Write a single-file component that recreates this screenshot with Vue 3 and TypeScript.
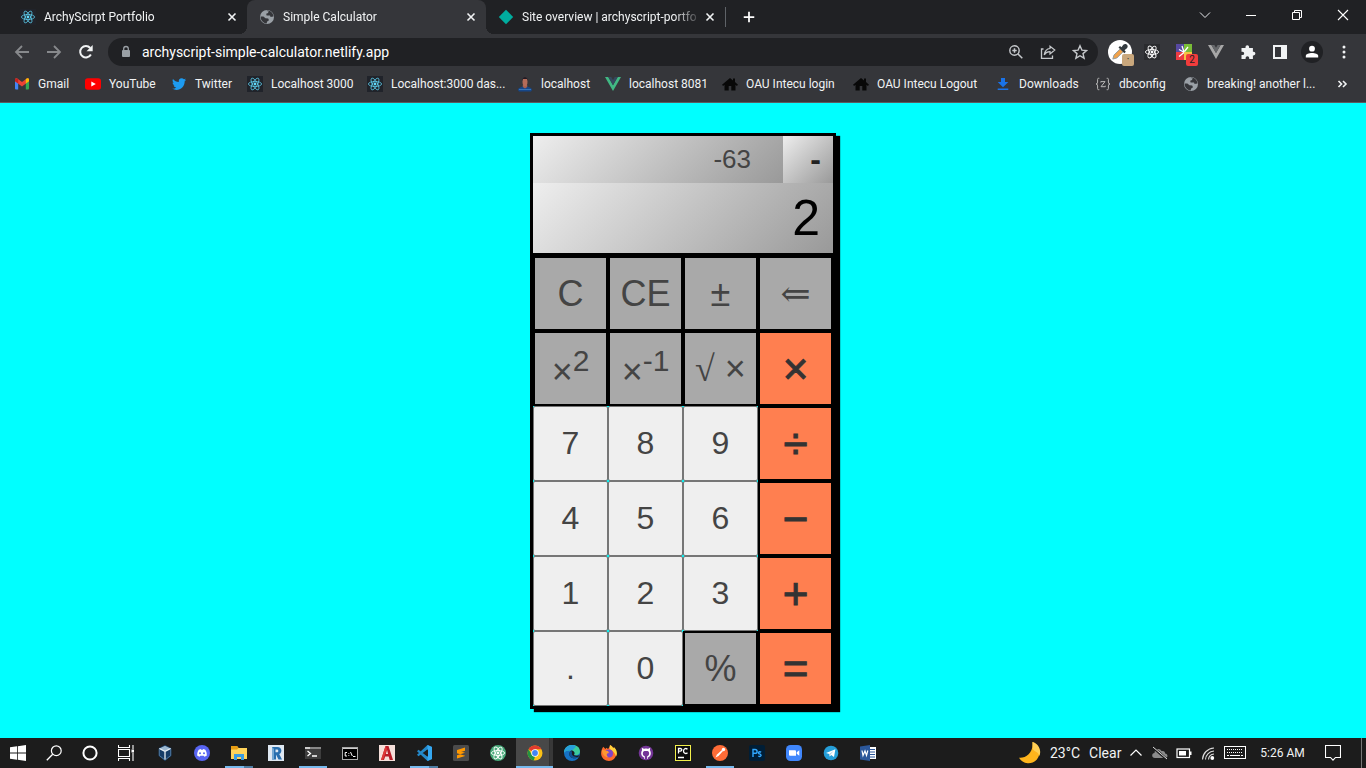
<script setup lang="ts">
interface Tab { icon: string; title: string; active?: boolean }
interface Bookmark { icon: string; label: string; width: number }
interface Extension { icon: string; label: string; badge?: string; tone?: string }
interface Task { icon: string; label: string; state?: string }
interface Key { label: string; kind: string; sup?: string; symbol?: boolean; root?: boolean }

const reactMark = (c: string, w: number) =>
  `<circle cx="8" cy="8" r="1.4" fill="${c}"/><g fill="none" stroke="${c}" stroke-width="${w}"><ellipse cx="8" cy="8" rx="6.6" ry="2.5"/><ellipse cx="8" cy="8" rx="6.6" ry="2.5" transform="rotate(60 8 8)"/><ellipse cx="8" cy="8" rx="6.6" ry="2.5" transform="rotate(120 8 8)"/></g>`

const icons: Record<string, string> = {
  react: `<rect width="16" height="16" fill="#20232a"/>${reactMark('#61dafb', 0.7)}`,
  reactLight: `<rect width="16" height="16" fill="#2a2b2e"/>${reactMark('#ffffff', 0.9)}`,
  globe: `<circle cx="8" cy="8" r="7" fill="#9aa0a6"/><path d="M1.6 7.6 L4.4 7.4 L6.5 9.2 L9.2 9.5 L10 11.2 L8.2 12.6 L7.6 14.6 C4 14.2 1.6 11.4 1.6 7.6Z M7.2 2 L9.7 2.2 L9 4 L7.2 4.8 L7.6 6.4 L11 6.6 L11.6 8 L14.4 7.4 C14.2 4 11.5 1.8 8.8 1.6Z" fill="#35363a"/>`,
  diamond: `<path d="M8 .8 15.2 8 8 15.2 .8 8Z" fill="#00ad9f"/>`,
  close: `<path d="M4.5 4.5l7 7m0-7l-7 7" stroke="#f1f3f4" stroke-width="1.6"/>`,
  plus: `<path d="M8 2v12M2 8h12" stroke="#fff" stroke-width="2"/>`,
  back: `<path d="M15 8H2M8 2L2 8l6 6" fill="none" stroke="#87898c" stroke-width="1.8"/>`,
  forward: `<path d="M1 8h13M8 2l6 6-6 6" fill="none" stroke="#87898c" stroke-width="1.8"/>`,
  reload: `<path d="M12.9 10.5A5.7 5.7 0 1 1 12.2 4" fill="none" stroke="#f1f3f4" stroke-width="2"/><path d="M14.7 1v6.2H8.5Z" fill="#f1f3f4"/>`,
  lock: `<rect x="4" y="6" width="8" height="7" rx="1" fill="#9aa0a6"/><path d="M5.7 7V4.8a2.3 2.3 0 0 1 4.6 0V7" fill="none" stroke="#9aa0a6" stroke-width="1.3"/>`,
  magnify: `<circle cx="6.5" cy="6.5" r="4.7" fill="none" stroke="#c5c8cb" stroke-width="1.4"/><path d="M10 10l4.3 4.3M4.3 6.5h4.4M6.5 4.3v4.4" stroke="#c5c8cb" stroke-width="1.5"/>`,
  share: `<path d="M3.5 5H1.5v9.3h11V11.5" fill="none" stroke="#c5c8cb" stroke-width="1.3"/><path d="M10 2.2L14.8 6 10 9.9V7.7C7.5 7.7 5.6 8.7 4.2 10.8 4.7 7.5 6.7 4.8 10 4.5Z" fill="none" stroke="#c5c8cb" stroke-width="1.2"/>`,
  star: `<path d="M8 1.8l1.9 4.3 4.7.4-3.6 3.1 1.1 4.6L8 11.7l-4.1 2.5L5 9.6 1.4 6.5l4.7-.4Z" fill="none" stroke="#c5c8cb" stroke-width="1.4"/>`,
  dropper: `<circle cx="8" cy="8" r="8" fill="#fff"/><path d="M3.2 12.7L4 10l4.2-4.1 1.9 1.9L5.9 12Z" fill="#f2a24a" stroke="#8d989b" stroke-width=".6"/><path d="M7 5l1-1 1 .8 1.2-1.6c1.6-1.6 4 .5 2.4 2.3L11 6.8l.9 1-1 1Z" fill="#343b40"/>`,
  burst: `<path d="M0 0h8v8H0Z" fill="#5749a1"/><path d="M8 0h8v8H8Z" fill="#79bd37"/><path d="M0 8h8v8H0Z" fill="#ed3b43"/><path d="M8 8h8v8H8Z" fill="#f6c243"/><path d="M8 8L6 2M8.500 7.500l3.500-4.500M7.500 8L3 5.500M8 8.500l-5 4" stroke="#fff" stroke-width="1.3"/>`,
  vueGrey: `<path d="M0 1h3.4L8 9l4.6-8H16L8 15Z" fill="#a7a7a7"/><path d="M3.4 1h3L8 3.8 9.6 1h3L8 9Z" fill="#66686b"/>`,
  puzzle: `<path d="M1.5 4h4V3a1.8 1.8 0 0 1 3.6 0v1h3.8v3.8h.7a1.8 1.8 0 0 1 0 3.6h-.7V15H9.2v-1a1.8 1.8 0 0 0-3.6 0v1H1.5v-3.9h1a1.7 1.7 0 0 0 0-3.4h-1Z" fill="#f1f3f4"/>`,
  panel: `<path d="M1 1h14v14H1Z M3 3v10h6V3Z" fill="#f1f3f4" fill-rule="evenodd"/>`,
  person: `<circle cx="8" cy="8" r="8" fill="#202124"/><circle cx="8" cy="5.6" r="2.1" fill="#fff"/><path d="M3.5 12V10.8C3.5 8 12.5 8 12.5 10.8V12Z" fill="#fff"/>`,
  menu: `<g fill="#f1f3f4"><circle cx="8" cy="3" r="1.5"/><circle cx="8" cy="8" r="1.5"/><circle cx="8" cy="13" r="1.5"/></g>`,
  gmail: `<path d="M1 3.5h3.2V13.5H2A1 1 0 0 1 1 12.5Z" fill="#4285f4"/><path d="M11.8 3.5H15v9a1 1 0 0 1-1 1h-2.2Z" fill="#34a853"/><path d="M1 3.7C1 2.3 2.7 1.9 3.6 2.7L8 6l4.4-3.3c1-.8 2.6-.3 2.6 1v1.5L8 10.4 1 5.2Z" fill="#ea4335"/><path d="M11.8 3.2l.6-.5c1-.8 2.6-.3 2.6 1v1.5l-3.2 2.4Z" fill="#fbbc04"/><path d="M1 3.7v1.5l3.2 2.4V3.2C3 2 1 2.2 1 3.7Z" fill="#c5221f"/>`,
  youtube: `<rect x="0" y="2.2" width="16" height="11.6" rx="2.8" fill="#f00"/><path d="M6.3 5.4v5.2L10.8 8Z" fill="#fff"/>`,
  twitter: `<path d="M15.2 3.7c-.5.3-1.1.4-1.7.5.6-.4 1-.9 1.2-1.6-.5.3-1.2.6-1.8.7A2.9 2.9 0 0 0 7.9 6C5.5 5.9 3.4 4.7 2 2.9c-.8 1.4-.4 3 .9 3.9-.5 0-.9-.1-1.3-.4 0 1.5 1 2.6 2.3 2.9-.4.1-.9.1-1.3.1.4 1.1 1.4 2 2.7 2-1.2 1-2.7 1.4-4.3 1.2 5.9 3.7 12.7-.5 12.7-7.3.6-.4 1.1-1 1.5-1.6Z" fill="#1d9bf0"/>`,
  portrait: `<path d="M1 14c0-2.5 3.500-2.600 4.500-3.500h5c1 .9 4.500 1 4.500 3.500l-1 1.500H2Z" fill="#164789"/><path d="M5.8 9h4.4v2L8 12.6 5.8 11Z" fill="#a86150"/><ellipse cx="8" cy="5.800" rx="2.5" ry="4.400" fill="#b46c59"/><path d="M5.300 5C5-.3 11-.3 10.700 5L10 3H6Z" fill="#211b25"/><path d="M2 13.5h12" stroke="#4888c9" stroke-width=".7"/>`,
  vue: `<path d="M0 1h3.3L8 9.2 12.7 1H16L8 15Z" fill="#41b883"/><path d="M3.3 1h3L8 4l1.7-3h3L8 9.2Z" fill="#35495e"/>`,
  house: `<path d="M8 2L0 8.7l1.1 1.2L2.5 8.7V14.5h4.2V10h2.6v4.5h4.2V8.7l1.4 1.2L16 8.7 13 6.1V2.5h-2v2Z" fill="#080808"/>`,
  download: `<path d="M6 2h4v4h3.3L8 11.2 2.7 6H6ZM2.7 12.5h10.6v1.6H2.7Z" fill="#1a73e8"/>`,
  braces: `<g fill="none" stroke="#b8b8b8" stroke-width="1"><path d="M4.3 2.3H3.5Q2.6 2.3 2.6 3.4v2.7Q2.6 8 1 8q1.6 0 1.6 1.9v2.7q0 1.1.9 1.1h.8M11.7 2.3h.8q.9 0 .9 1.1v2.7Q13.4 8 15 8q-1.6 0-1.6 1.9v2.7q0 1.1-.9 1.1h-.8M5.8 6.5V5.6h4.2L6 10.7h4.3v-1"/></g>`,
  more: `<path d="M3.500 5L6.500 8l-3 3M8 5L11 8l-3 3" fill="none" stroke="#f1f3f4" stroke-width="1.6"/>`,
  winChevron: `<path d="M3 5.5l5 5 5-5" fill="none" stroke="#e8eaed" stroke-width="1"/>`,
  winMin: `<path d="M3 8.5h10" stroke="#fff"/>`,
  winRestore: `<path d="M3.5 5.5h7v7h-7ZM5.5 5.5v-2h7v7h-2" fill="none" stroke="#fff"/>`,
  winClose: `<path d="M3 3l10 10M13 3L3 13" stroke="#fff" stroke-width="1.1"/>`,
  windows: `<path d="M0 2.3l7-1V7.6H0ZM7.8 1.2L16 0v7.6H7.8ZM0 8.4h7v6.3l-7-1ZM7.8 8.4H16V16l-8.2-1.2Z" fill="#fff"/>`,
  search: `<circle cx="10.3" cy="5.7" r="4.9" fill="none" stroke="#fff" stroke-width="1.2"/><path d="M6.7 9.3L.8 15.2" stroke="#fff" stroke-width="1.3"/>`,
  cortana: `<circle cx="8" cy="8" r="6.6" fill="none" stroke="#fff" stroke-width="2"/>`,
  taskview: `<path d="M.5 0v2.5h11V0M.5 16v-2.5h11V16M.5 4.5h11v7H.5ZM15 0v4M15 8v8" fill="none" stroke="#fff" stroke-width="1.1"/><path d="M13.5 4.5h2.500v3h-2.500Z" fill="#fff"/>`,
  vbox: `<path d="M8 0l6.300 3v8L8 16l-6.300-5V3Z" fill="#153c67"/><path d="M8 .8l5.600 2.700L8 6.300 2.400 3.500Z" fill="#9cb8d0"/><path d="M2.300 3.500L8 6.300V15M13.700 3.500L8 6.300" fill="none" stroke="#e7eef4" stroke-width="1.3"/><path d="M2.300 4v6.500L8 15l5.700-4.500V4" fill="none" stroke="#5e87ac" stroke-width=".8"/>`,
  discord: `<circle cx="8" cy="8" r="8" fill="#5865f2"/><path d="M4.700 4.700l2-.6.500.7h1.600l.5-.7 2 .6c1.300 2 1.700 4 1.400 6l-2.300 1-.7-1H6.300l-.7 1-2.300-1c-.3-2 .1-4 1.400-6Z" fill="#fff"/><circle cx="6" cy="8.200" r="1" fill="#5865f2"/><circle cx="10" cy="8.200" r="1" fill="#5865f2"/>`,
  folder: `<path d="M0 1h6l1.500 2H16v11H0Z" fill="#ffd35a"/><path d="M0 1h6l1.500 2L6 4.500H0Z" fill="#e89d13"/><path d="M3 15V9h10v6h-3v-3H6v3Z" fill="#3a9ce0"/>`,
  revit: `<rect width="16" height="16" fill="#dfe8f2"/><path d="M4 2h5.400c5 0 5 6 1.800 7L14 14.500h-3.500L8 9.500V14.500H4Z" fill="#286eae"/><path d="M7.500 4.500H9c1.800 0 1.800 2.800 0 2.800H7.500Z" fill="#dfe8f2"/><path d="M4 2l2 2v11L4 14Z" fill="#75a8d3"/>`,
  terminal: `<rect y="2" width="16" height="12" fill="#3d3d3d"/><path d="M0 2h16v2H0Z" fill="#888"/><path d="M0 2h5v2H0Z" fill="#ccc"/><path d="M2.500 6l3 2.500-3 2.500M7 11h5" fill="none" stroke="#fff" stroke-width="1.3"/>`,
  cmd: `<rect x=".5" y="2.500" width="15" height="12" fill="#000" stroke="#aaa"/><path d="M1 3.500h14" stroke="#ccc"/><path d="M5 7.500H3.200v3.500H5M6.800 8v.8M6.800 10.200v.8M8.500 7l1.800 4M11 11.500h2.500" fill="none" stroke="#fff"/>`,
  autocad: `<rect width="16" height="16" fill="#f5dfda"/><path d="M2 15L6.500 1h3L14 15h-3.300L9.700 11.500H6.200L5 15Z" fill="#b91c28"/><path d="M6.900 9L8 4.700 9.100 9Z" fill="#f5dfda"/><path d="M6.500 1l1.500 3-4 11H2Z" fill="#df3938"/>`,
  vscode: `<path d="M11.500 0L16 2v12l-4.500 2L1 6.300l1.500-1.500L12 12V4L2.500 11.300 1 9.800Z" fill="#2489ca"/><path d="M11.500 0L16 2v12l-4.500 2Z" fill="#35a8f2"/><path d="M12 4.500v7L7.500 8Z" fill="#1c1c1c"/>`,
  sublime: `<rect width="16" height="16" rx="1.500" fill="#4b4b4b"/><path d="M12 2.600L4 5v3.200l8-2.400ZM4 8.200l8 2.600V7.700L4 5.200ZM12 7.700v3.200L4 13.400v-3.200Z" fill="#ff9800"/>`,
  atom: `<circle cx="8" cy="8" r="8" fill="#48a979"/>${reactMark('#ffffff', 0.9)}`,
  chrome: `<circle cx="8" cy="8" r="7.500" fill="#fbc116"/><path d="M8 8L1.500 4.300A7.500 7.500 0 0 1 14.500 4.300H8Z" fill="#e33b2e"/><path d="M1.500 4.300L5 10l3 1.500-1.200 3.900A7.500 7.500 0 0 1 1.500 4.300Z" fill="#229342"/><circle cx="8" cy="8" r="3.700" fill="#fff"/><circle cx="8" cy="8" r="2.900" fill="#4285f4"/>`,
  edge: `<circle cx="8" cy="8" r="8" fill="#1672c5"/><path d="M0 8C0-2.500 16-2.500 16 6.500c0 3.500-4.200 4.500-6 3.200 1.300-1.700 0-4.200-2.700-4.200C4 5.500.2 6 0 8Z" fill="#3ccb9c"/><path d="M0 8C0 1 8-2 12 1.500 10 4 9 5 7 5.300 4 5 1 6 0 8Z" fill="#279fdb"/><path d="M7.300 5.500C4 8 5 12 8.500 13c2.500.7 4.700-.2 6-1.300l1-1.700c-2 1.200-5.500.5-5.500-.3C11.300 8 10 5.500 7.300 5.500Z" fill="#1c1c1c"/><path d="M7.300 5.500C4 8 5 12 8.500 13c2.500.7 4.700-.2 6-1.300C11 12.500 7 10.500 8 7.500Z" fill="#104f93"/>`,
  firefox: `<path d="M1 4l1.200-2.200L4.500 4l1-1.300L7 4c1-1 2-2.500 1.900-4 2 1 2.700 2 3.100 3.200l1-1C18.500 10 13 16 8 16S-2 11.500 1 4Z" fill="#ff6a2b"/><path d="M9 0c2 1 2.700 2 3.100 3.200l1-1C17 6 16 10 15 11.500 14 7 11 6 8.500 3.500Z" fill="#ffd33a"/><circle cx="8" cy="8.500" r="4" fill="#8246c7"/><path d="M1 5c3-.5 4 1 6 1L8 8C5 8 5 11 8 12.500c-4 0-7-3-7-7.500Z" fill="#ff9831"/>`,
  github: `<circle cx="8" cy="8" r="7.300" fill="#743597"/><path d="M8 3.400a4.700 4.700 0 0 0-2 9v1.300l2 .6 2-.6v-1.300a4.700 4.700 0 0 0-2-9Z" fill="#fff"/><path d="M3.800 2.800l3 1.400-2.600 2ZM12.200 2.800l-3 1.400 2.600 2Z" fill="#fff"/><path d="M6.800 14.800v-3.500C4 10.500 4.500 6 6.500 6h3c2 0 2.500 4.500-.3 5.300v3.500Z" fill="#743597"/>`,
  pycharm: `<rect x=".5" y=".5" width="15" height="15" fill="#0b0b0b" stroke="#f3f04b"/><path d="M3.500 8.500V3.500h1.800c2 0 2 2.700 0 2.700H3.500M12.500 4.300C10.500 2.500 8.500 4 8.500 6s2 3.500 4 1.700M3 12.500h6" fill="none" stroke="#fff" stroke-width="1.3"/>`,
  postman: `<circle cx="8" cy="8" r="8" fill="#ff6c37"/><path d="M3.500 12.500L5 9.500 10 5l1 1-4.500 5Z" fill="#fff"/><circle cx="11.500" cy="4.500" r="1.700" fill="#fff"/>`,
  photoshop: `<rect width="16" height="16" rx="2" fill="#001e36"/><path d="M4 12V4.500h2c2.800 0 2.800 3.800 0 3.800H4M12.200 7.100C9.500 6 8.600 8.200 10.500 8.900c2.800.9 1.500 3.300-1.200 2.200" fill="none" stroke="#31a8ff" stroke-width="1.4"/>`,
  zoom: `<rect width="16" height="16" rx="4.500" fill="#4087fc"/><path d="M3 5.300h6a1 1 0 0 1 1 1v4.400H4a1 1 0 0 1-1-1ZM10.700 7.200L13.300 5.300v5.400l-2.600-1.900Z" fill="#fff"/>`,
  telegram: `<circle cx="8" cy="8" r="7.300" fill="#259ed8"/><path d="M3 7.900l9.400-3.700L11 12 8.200 10l-1.500 1.500L6.300 9Z" fill="#fff"/><path d="M6.300 9l4.500-3.200-3.300 3.700-.8 2Z" fill="#a9cfe4"/>`,
  word: `<path d="M9 2h7v12H9Z" fill="#fff"/><path d="M10 4.500h5M10 7h5M10 9.500h5M10 12h5" stroke="#2b579a"/><path d="M0 1.500L10 0v16L0 14.500Z" fill="#2b579a"/><path d="M2 5.500l1 5L5 6l1.500 4.500 1.300-5" fill="none" stroke="#fff" stroke-width="1.2"/>`,
  moon: `<path d="M9.800 0A8 8 0 1 1 0 11.500C5 12 10.600 8 9.800 0Z" fill="#ffb51c"/><path d="M9.800 0c4.500 1.200 6.800 6 5 10.200C13.500 6 12 8 10 5Z" fill="#ffcf55"/>`,
  up: `<path d="M2.500 10.500L8 5l5.500 5.500" fill="none" stroke="#fff" stroke-width="1.2"/>`,
  cloud: `<path d="M3 13C-.8 13-.5 8 2.500 8 2.500 3.500 8 2.500 9.500 6c3-.6 3.700 1.200 3.500 2.500 3 0 3.500 4.500 0 4.500Z" fill="#8b8b8b"/><path d="M1 2.500l14 12" stroke="#1c1c1c" stroke-width="2.4"/><path d="M1 2l14 12" stroke="#ddd"/>`,
  battery: `<rect x="1" y="4" width="12.500" height="8.500" fill="none" stroke="#fff" stroke-width="1.2"/><path d="M3 6h7v4.500H3ZM14 6.500h1.500V10H14Z" fill="#fff"/>`,
  wifi: `<g fill="none" stroke="#ddd" stroke-width="1.1"><path d="M2.500 14.500A12 12 0 0 1 14 3M5.500 14.500A9 9 0 0 1 14 6M8.500 14.500A6 6 0 0 1 14 9"/></g><circle cx="12.300" cy="13" r="1.900" fill="#fff"/>`,
}

const tabs: Tab[] = [
  { icon: 'react', title: 'ArchyScirpt Portfolio' },
  { icon: 'globe', title: 'Simple Calculator', active: true },
  { icon: 'diamond', title: 'Site overview | archyscript-portfo' },
]
const bookmarks: Bookmark[] = [
  { icon: 'gmail', label: 'Gmail', width: 71 },
  { icon: 'youtube', label: 'YouTube', width: 86 },
  { icon: 'twitter', label: 'Twitter', width: 76 },
  { icon: 'react', label: 'Localhost 3000', width: 120 },
  { icon: 'react', label: 'Localhost:3000 das...', width: 150 },
  { icon: 'portrait', label: 'localhost', width: 88 },
  { icon: 'vue', label: 'localhost 8081', width: 117 },
  { icon: 'house', label: 'OAU Intecu login', width: 131 },
  { icon: 'house', label: 'OAU Intecu Logout', width: 142 },
  { icon: 'download', label: 'Downloads', width: 100 },
  { icon: 'braces', label: 'dbconfig', width: 88 },
  { icon: 'globe', label: 'breaking! another l...', width: 148 },
]
const extensions: Extension[] = [
  { icon: 'dropper', label: 'Colour picker', badge: '·', tone: 'tan' },
  { icon: 'reactLight', label: 'React tools' },
  { icon: 'burst', label: 'Page checker', badge: '2', tone: 'red' },
  { icon: 'vueGrey', label: 'Vue tools' },
  { icon: 'puzzle', label: 'Extensions' },
  { icon: 'panel', label: 'Side panel' },
  { icon: 'person', label: 'Profile' },
  { icon: 'menu', label: 'Menu' },
]
const systemTasks: Task[] = [
  { icon: 'windows', label: 'Start' },
  { icon: 'search', label: 'Search' },
  { icon: 'cortana', label: 'Cortana' },
  { icon: 'taskview', label: 'Task view' },
]
const apps: Task[] = [
  { icon: 'vbox', label: 'VirtualBox' },
  { icon: 'discord', label: 'Discord' },
  { icon: 'folder', label: 'File Explorer', state: 'running stacked' },
  { icon: 'revit', label: 'Revit' },
  { icon: 'terminal', label: 'Terminal', state: 'running' },
  { icon: 'cmd', label: 'Command Prompt' },
  { icon: 'autocad', label: 'AutoCAD' },
  { icon: 'vscode', label: 'Visual Studio Code', state: 'running stacked' },
  { icon: 'sublime', label: 'Sublime Text' },
  { icon: 'atom', label: 'Atom' },
  { icon: 'chrome', label: 'Chrome', state: 'focused' },
  { icon: 'edge', label: 'Edge' },
  { icon: 'firefox', label: 'Firefox' },
  { icon: 'github', label: 'GitHub Desktop' },
  { icon: 'pycharm', label: 'PyCharm' },
  { icon: 'postman', label: 'Postman', state: 'running' },
  { icon: 'photoshop', label: 'Photoshop' },
  { icon: 'zoom', label: 'Zoom' },
  { icon: 'telegram', label: 'Telegram' },
  { icon: 'word', label: 'Word' },
]
const digit = (label: string): Key => ({ label, kind: 'digit' })
const op = (label: string): Key => ({ label, kind: 'operator' })
const fn = (label: string, extra: Partial<Key> = {}): Key => ({ label, kind: 'function', ...extra })
const keys: Key[] = [
  fn('C'), fn('CE'), fn('±'), fn('⇐', { symbol: true }),
  fn('×', { sup: '2' }), fn('×', { sup: '-1' }), fn('×', { root: true }), op('×'),
  digit('7'), digit('8'), digit('9'), op('÷'),
  digit('4'), digit('5'), digit('6'), op('−'),
  digit('1'), digit('2'), digit('3'), op('+'),
  digit('.'), digit('0'), fn('%'), op('='),
]
</script>

<template>
  <div class="screen">
    <header class="browser">
      <div class="tabstrip">
        <div v-for="t in tabs" :key="t.title" class="tab" :class="{ active: t.active }">
          <svg class="icon" viewBox="0 0 16 16" v-html="icons[t.icon]" />
          <span class="tab-title">{{ t.title }}</span>
          <button class="bare" aria-label="Close tab"><svg class="icon" viewBox="0 0 16 16" v-html="icons.close" /></button>
        </div>
        <button class="bare new-tab" aria-label="New tab"><svg class="small" viewBox="0 0 16 16" v-html="icons.plus" /></button>
        <div class="window-controls">
          <button v-for="w in ['winChevron', 'winMin', 'winRestore', 'winClose']" :key="w" class="bare" :aria-label="w">
            <svg class="icon" viewBox="0 0 16 16" v-html="icons[w]" />
          </button>
        </div>
      </div>
      <div class="toolbar">
        <button v-for="n in ['back', 'forward', 'reload']" :key="n" class="bare tool" :aria-label="n">
          <svg class="icon" viewBox="0 0 16 16" v-html="icons[n]" />
        </button>
        <div class="omnibox">
          <svg class="icon" viewBox="0 0 16 16" v-html="icons.lock" />
          <input type="text" aria-label="Address" value="archyscript-simple-calculator.netlify.app">
          <button v-for="n in ['magnify', 'share', 'star']" :key="n" class="bare tool" :aria-label="n">
            <svg class="icon" viewBox="0 0 16 16" v-html="icons[n]" />
          </button>
        </div>
        <button v-for="e in extensions" :key="e.label" class="bare tool" :aria-label="e.label">
          <svg class="icon" :class="e.icon" viewBox="0 0 16 16" v-html="icons[e.icon]" />
          <span v-if="e.badge" class="badge" :class="e.tone">{{ e.badge }}</span>
        </button>
      </div>
      <nav class="bookmarks">
        <a v-for="b in bookmarks" :key="b.label" href="#" :style="{ width: b.width + 'px' }">
          <svg class="icon" viewBox="0 0 16 16" v-html="icons[b.icon]" />
          <span>{{ b.label }}</span>
        </a>
        <button class="bare overflow" aria-label="More bookmarks"><svg class="icon" viewBox="0 0 16 16" v-html="icons.more" /></button>
      </nav>
    </header>

    <main class="page">
      <section class="calculator">
        <div class="display">
          <output class="previous">-63</output>
          <output class="operation">-</output>
          <output class="current">2</output>
        </div>
        <div class="keys">
          <button v-for="(k, i) in keys" :key="i" :class="k.kind">
            <template v-if="k.root"><span class="symbol">√</span> ×</template>
            <span v-else-if="k.symbol" class="symbol">{{ k.label }}</span>
            <span v-else>{{ k.label }}<sup v-if="k.sup">{{ k.sup }}</sup></span>
          </button>
        </div>
      </section>
    </main>

    <footer class="taskbar">
      <div class="system">
        <button v-for="t in systemTasks" :key="t.label" class="bare" :aria-label="t.label">
          <svg class="icon" viewBox="0 0 16 16" v-html="icons[t.icon]" />
        </button>
      </div>
      <div class="apps">
        <button v-for="t in apps" :key="t.label" class="bare" :class="t.state" :aria-label="t.label">
          <svg class="icon" viewBox="0 0 16 16" v-html="icons[t.icon]" />
        </button>
      </div>
      <div class="tray">
        <button class="bare weather">
          <svg class="moon" viewBox="0 0 16 16" v-html="icons.moon" />
          <span>23°C</span><span>Clear</span>
        </button>
        <button v-for="n in ['up', 'cloud', 'battery', 'wifi']" :key="n" class="bare tray-icon" :aria-label="n">
          <svg class="icon" viewBox="0 0 16 16" v-html="icons[n]" />
        </button>
        <button class="bare keyboard" aria-label="Touch keyboard">
          <svg viewBox="0 0 22 14">
            <rect x=".5" y=".5" width="21" height="12" fill="none" stroke="#fff" />
            <path d="M3 3.5h16M3 6.5h16" stroke="#fff" stroke-dasharray="1 1" />
            <path d="M3 9.5h2M6 9.5h10M17 9.5h2" stroke="#fff" />
          </svg>
        </button>
        <button class="bare clock">5:26 AM</button>
        <button class="bare notice" aria-label="Notifications">
          <svg class="icon" viewBox="0 0 16 16"><path d="M.5.5h15v12h-5L8 15.2 5.5 12.500h-5Z" fill="none" stroke="#fff" stroke-width="1.1" /></svg>
        </button>
        <button class="bare desktop" aria-label="Show desktop" />
      </div>
    </footer>
  </div>
</template>

<style>
body { margin: 0; }
</style>

<style scoped>
.screen {
  display: flex;
  flex-direction: column;
  min-height: 100vh;
  overflow: hidden;
  font-family: Roboto, "Noto Sans", sans-serif;
  font-size: 12px;
  color: #f1f3f4;
}
.screen * { box-sizing: border-box; }
.icon { width: 16px; height: 16px; flex: none; display: block; }
.small { width: 14px; height: 14px; display: block; }
.bare {
  display: flex;
  align-items: center;
  justify-content: center;
  flex: none;
  padding: 0;
  border: 0;
  background: none;
  color: inherit;
  font: inherit;
  position: relative;
}
.browser { background: #35363a; border-bottom: 1px solid #5b5c60; }
.tabstrip {
  display: flex;
  height: 34px;
  padding-left: 8px;
  background: #202124;
}
.tab {
  position: relative;
  display: flex;
  align-items: center;
  gap: 8px;
  width: 239px;
  padding: 0 7px 0 12px;
}
.tab.active { background: #35363a; border-radius: 8px 8px 0 0; }
.tab.active::before,
.tab.active::after {
  content: "";
  position: absolute;
  bottom: 0;
  width: 8px;
  height: 8px;
}
.tab.active::before { right: 100%; background: radial-gradient(circle at 0 0, transparent 8px, #35363a 8px); }
.tab.active::after { left: 100%; background: radial-gradient(circle at 100% 0, transparent 8px, #35363a 8px); }
.tab-title {
  flex: 1;
  min-width: 0;
  white-space: nowrap;
  margin-right: -8px;
  mask-image: linear-gradient(to right, #000 152px, transparent 180px);
}
.new-tab { width: 46px; margin: 7px 0; border-left: 1px solid #5f6368; height: 20px; }
.window-controls { display: flex; margin-left: auto; height: 29px; }
.window-controls .bare { width: 46px; }
.toolbar { display: flex; align-items: center; height: 36px; padding: 0 6px; }
.tool { width: 32px; height: 32px; }
.omnibox {
  flex: 1;
  display: flex;
  align-items: center;
  height: 28px;
  margin: 0 6px;
  padding: 0 2px 0 10px;
  border-radius: 14px;
  background: #202124;
}
.omnibox input {
  flex: 1;
  min-width: 0;
  padding: 0;
  margin-left: 8px;
  border: 0;
  outline: 0;
  background: none;
  color: #fff;
  font: inherit;
  font-size: 14px;
}
.icon.dropper { width: 24px; height: 24px; }
.icon.person { width: 22px; height: 22px; }
.badge {
  position: absolute;
  right: 2px;
  bottom: 2px;
  width: 12px;
  height: 12px;
  border-radius: 2px;
  color: #202124;
  font-size: 10px;
  line-height: 12px;
}
.badge.tan { background: #c9a77c; }
.badge.red { background: #f13c3c; }
.bookmarks {
  display: flex;
  align-items: center;
  height: 32px;
  padding: 0 15px 4px 14px;
}
.bookmarks a {
  display: flex;
  align-items: center;
  gap: 8px;
  flex: none;
  color: inherit;
  text-decoration: none;
  white-space: nowrap;
}
.overflow { margin-left: auto; }

.page {
  flex: 1;
  display: flex;
  justify-content: center;
  align-items: flex-start;
  padding-top: 30px;
  background: aqua;
  font-family: "Liberation Sans", Arial, sans-serif;
}
.calculator {
  width: 306px;
  border: 3px solid #000;
  background: aqua;
  box-shadow: 4px 3px 1px #000;
}
.display {
  display: grid;
  grid-template-columns: 1fr 50px;
  grid-template-rows: 47px 70px;
  border-bottom: 3px solid #000;
}
.display output {
  display: flex;
  align-items: center;
  justify-content: flex-end;
  padding-right: 12px;
  background: linear-gradient(135deg, #eee, #999);
}
.display .previous { padding-right: 32px; font-size: 26px; color: #444; }
.display .operation { font-size: 32px; font-weight: bold; color: #222; }
.display .current { grid-column: 1 / -1; padding-right: 13px; font-size: 50px; color: #000; }
.keys { display: grid; grid-template-columns: repeat(4, 1fr); grid-auto-rows: 75px; }
.keys button {
  padding: 0;
  font-family: inherit;
  color: #444;
  white-space: nowrap;
}
.keys .digit { border: 1px solid #767676; border-radius: 2px; background: #efefef; font-size: 32px; }
.keys .function { border: 2px solid #000; background: #a9a9a9; font-size: 36px; }
.keys .operator {
  border: 2px solid #000;
  background: coral;
  color: #333;
  font-size: 44px;
  -webkit-text-stroke: 1px #333;
}
.symbol { font-family: "Liberation Serif", "DejaVu Serif", serif; }

.taskbar { display: flex; height: 30px; background: #1c1c1c; }
.system, .apps, .tray { display: flex; }
.system .bare { width: 36px; }
.apps { margin-left: 2px; }
.apps .bare { width: 37px; }
.apps .running::after {
  content: "";
  position: absolute;
  left: 5px;
  bottom: 0;
  width: 28px;
  height: 2px;
  background: #76b9ed;
}
.apps .stacked::after { background: linear-gradient(to right, #76b9ed 19px, #4e7da3 19px); }
.apps .focused {
  background: linear-gradient(to right, #484848 33px, #2c2c2c 33px, #383838 34px);
  border-bottom: 2px solid #76b9ed;
}
.apps .focused .icon { margin-top: 2px; }
.tray { margin-left: auto; }
.weather { width: 105px; gap: 9px; justify-content: flex-start; font-size: 14px; }
.moon { width: 22px; height: 22px; }
.tray-icon { width: 24px; }
.keyboard { width: 30px; }
.keyboard svg { width: 22px; height: 14px; }
.clock { width: 65px; }
.notice { width: 36px; margin-right: 10px; }
.desktop { width: 5px; border-left: 1px solid #777; }
</style>
